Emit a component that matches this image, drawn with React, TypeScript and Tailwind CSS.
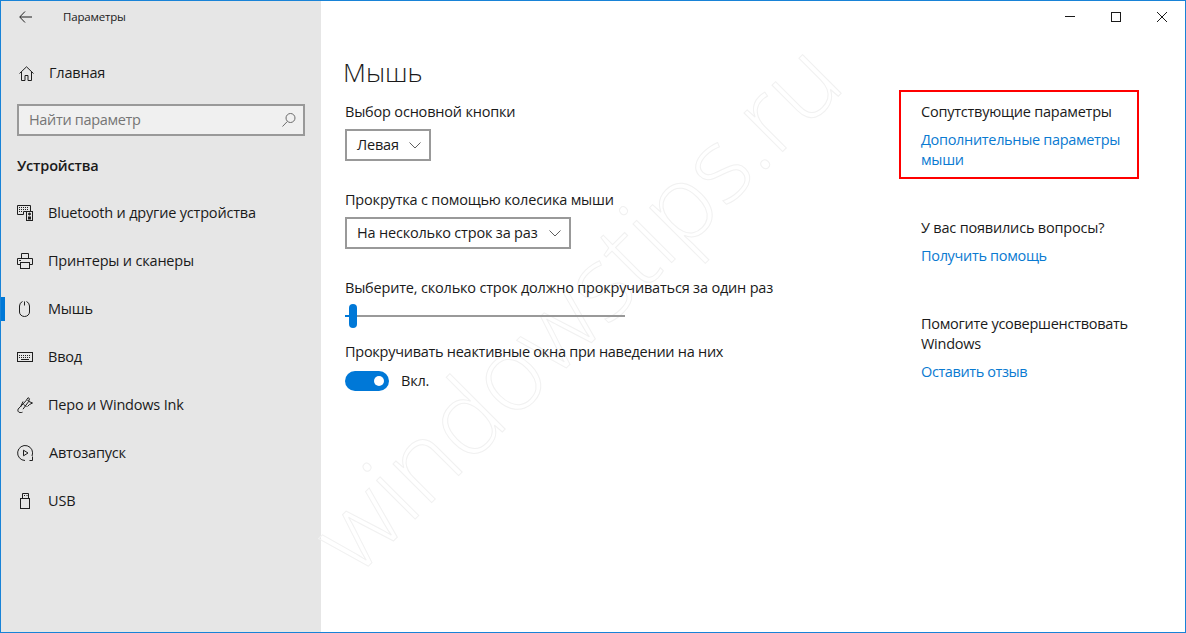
import React from "react";

const S = ({ children, w = 16, h = 16 }: { children: React.ReactNode; w?: number; h?: number }) => (
  <svg width={w} height={h} viewBox={`0 0 ${w} ${h}`} fill="none" stroke="#1f1f1f" strokeWidth="1" className="block shrink-0">
    {children}
  </svg>
);

const icons: Record<string, React.ReactNode> = {
  devices: (
    <S>
      <path d="M.5 .5h13v6h-7v3h-6z" />
      <path d="M2 2.500h10M2 4.500h10M2 6.500h3" strokeDasharray="1 1" />
      <rect x="9.500" y="6.500" width="6" height="9" fill="#e6e6e6" />
      <circle cx="12.500" cy="9" r="1" fill="#1f1f1f" />
      <rect x="11" y="11.500" width="3" height="3" fill="#1f1f1f" stroke="none" />
    </S>
  ),
  printer: (
    <S>
      <path d="M4.500 5.500v-5h7v5M3.500 11.500h-3v-6h15v6h-3" />
      <rect x="3.500" y="9.500" width="9" height="6" />
      <path d="M2 7.500h2" />
    </S>
  ),
  mouse: (
    <S>
      <path d="M5.500 .5a5 5 0 0 0-3 4.500v6a5 4.500 0 0 0 10 0V5a5 5 0 0 0-3-4.500" />
      <path d="M7.500 .5v4" />
    </S>
  ),
  keyboard: (
    <S>
      <rect x=".5" y="3.500" width="15" height="9" />
      <path d="M2 6.500h12M2 8.500h12" strokeDasharray="1 1" />
      <path d="M4 10.500h8" />
    </S>
  ),
  pen: (
    <S>
      <path d="M5.500 15.200c-1.500.8-3.800.5-4.500-1-.6-1.500.5-3 2-4l6-6.500 2-3 1.500 1-1 3-5.500 7.500" />
      <path d="M6 4.500 3.500 10M10.500 3l1.500 1.500 3.500 1.500-3 1.500-2 2" />
      <path d="M6.500 7.500l3 2" />
    </S>
  ),
  play: (
    <S>
      <path d="M15 11A7.500 7.500 0 1 0 8 15.500" />
      <path d="M12.500 15.500h3v-4" />
      <path d="M6.500 5.200v5.600l4.500-2.800z" />
    </S>
  ),
  usb: (
    <S>
      <path d="M5.500 .5h6v5h-6z" />
      <rect x="3.500" y="5.500" width="9" height="10" />
      <path d="M7 2.500h1M9.500 2.500h1" />
    </S>
  ),
};

const nav = [
  ["devices", "Bluetooth и другие устройства"],
  ["printer", "Принтеры и сканеры"],
  ["mouse", "Мышь"],
  ["keyboard", "Ввод"],
  ["pen", "Перо и Windows Ink"],
  ["play", "Автозапуск"],
  ["usb", "USB"],
];

const Chevron = () => (
  <svg width="12" height="7" viewBox="0 0 12 7" fill="none" stroke="#5f5f5f" strokeWidth="1" className="block">
    <path d="M.5 .5 6 6l5.500-5.500" />
  </svg>
);

const Select = ({ label, w }: { label: string; w: string }) => (
  <div className={`flex h-[32px] items-center justify-between border-2 border-[#999999] pl-[10px] pr-[8px] ${w}`}>
    <span>{label}</span>
    <Chevron />
  </div>
);

export default function App() {
  return (
    <div
      className="relative flex h-[633px] w-[1186px] overflow-hidden border border-[#1883d7] bg-white text-[14.5px] leading-[20px] tracking-[-0.19px] text-[#1a1a1a]"
      style={{ fontFamily: '"Open Sans", "Noto Sans", sans-serif' }}
    >
      <aside className="flex w-[320px] shrink-0 flex-col bg-[#e6e6e6]">
        <div className="flex h-[32px] items-center pl-[18px]">
          <svg width="13" height="12" viewBox="0 0 13 12" fill="none" stroke="#1f1f1f" strokeWidth="1" className="block">
            <path d="M13 6H1M6 .5.700 6 6 11.500" />
          </svg>
          <span className="ml-[31px] text-[11.5px]">Параметры</span>
        </div>
        <div className="mt-[16px] flex h-[48px] items-center pl-[18px]">
          <svg width="15" height="15" viewBox="0 0 15 15" fill="none" stroke="#1f1f1f" strokeWidth="1" className="block">
            <path d="M.500 7.500 7.500 .800l7 6.700M2.500 6v8.500h3.500V9.500h3v5h3.500V6" />
          </svg>
          <span className="ml-[15px]">Главная</span>
        </div>
        <div className="mx-[16px] mt-[7px] flex h-[32px] items-center justify-between border-2 border-[#999999] bg-[#f0f0f0] pl-[10px] pr-[7px] tracking-[-0.33px] text-[#757575]">
          <span>Найти параметр</span>
          <svg width="14" height="14" viewBox="0 0 14 14" fill="none" stroke="#6b6b6b" strokeWidth="1" className="block">
            <circle cx="8.500" cy="5" r="4.500" />
            <path d="M5.300 8.500.500 13.500" />
          </svg>
        </div>
        <div className="ml-[16px] mt-[20px] font-semibold">Устройства</div>
        <nav className="mt-[13px] flex flex-col">
          {nav.map(([ic, label]) => (
            <div key={label} className="relative flex h-[48px] items-center pl-[16px]">
              {label === "Мышь" && <div className="absolute left-0 top-[12px] h-[24px] w-[4px] bg-[#0078d7]" />}
              {icons[ic]}
              <span className={label === "Автозапуск" ? "ml-[16px]" : "ml-[15px]"}>{label}</span>
            </div>
          ))}
        </nav>
      </aside>

      <main className="relative flex min-w-0 flex-1 flex-col">
        <div
          className="pointer-events-none absolute left-[-127px] top-[252px] w-[760px] -rotate-45 whitespace-nowrap text-center text-[103px] leading-none tracking-normal text-transparent [-webkit-text-stroke:1px_#f1f1f1]"
          style={{ fontWeight: 300 }}
        >
          windowstips.ru
        </div>
        <div className="relative flex h-[31px] justify-end">
          <div className="flex h-[31px] w-[46px] items-center justify-center">
            <div className="h-px w-[10px] bg-[#1a1a1a]" />
          </div>
          <div className="flex h-[31px] w-[46px] items-center justify-center">
            <div className="h-[10px] w-[10px] border border-[#1a1a1a]" />
          </div>
          <div className="flex h-[31px] w-[46px] items-center justify-center">
            <svg width="10" height="10" viewBox="0 0 10 10" stroke="#1a1a1a" strokeWidth="1" className="block">
              <path d="M0 0 10 10M10 0 0 10" />
            </svg>
          </div>
        </div>
        <div className="relative flex flex-1">
          <section className="ml-[24px] w-[554px] shrink-0">
            <h1 className="ml-[-2px] mt-[20px] text-[26.5px] font-light leading-[40px] tracking-normal">Мышь</h1>
            <div className="mt-[10px]">Выбор основной кнопки</div>
            <div className="mt-[7px]"><Select label="Левая" w="w-[86px]" /></div>
            <div className="mt-[29px]">Прокрутка с помощью колесика мыши</div>
            <div className="mt-[7px]"><Select label="На несколько строк за раз" w="w-[226px]" /></div>
            <div className="mt-[29px]">Выберите, сколько строк должно прокручиваться за один раз</div>
            <div className="relative mt-[6px] flex h-[24px] w-[280px] items-center">
              <div className="h-[2px] w-full bg-[#999999]" />
              <div className="absolute left-0 top-[11px] h-[2px] w-[5px] bg-[#0078d7]" />
              <div className="absolute left-[4px] top-0 h-[24px] w-[8px] rounded-full bg-[#0078d7]" />
            </div>
            <div className="mt-[14px] tracking-[-0.27px]">Прокручивать неактивные окна при наведении на них</div>
            <div className="mt-[9px] flex items-center">
              <div className="flex h-[20px] w-[44px] items-center justify-end rounded-full bg-[#0078d7] pr-[5px]">
                <div className="h-[10px] w-[10px] rounded-full bg-white" />
              </div>
              <span className="ml-[12px]">Вкл.</span>
            </div>
          </section>
          <section className="mt-[58px] w-[240px] shrink-0">
            <div className="h-[89px] border-2 border-[#ff0000] pl-[20px] pr-[10px] pt-[10px]">
              <div className="tracking-[-0.23px]">Сопутствующие параметры</div>
              <div className="mt-[8px] tracking-[-0.32px] text-[#0a7ad1]">Дополнительные параметры мыши</div>
            </div>
            <div className="ml-[22px] mt-[39px]">У вас появились вопросы?</div>
            <div className="ml-[22px] mt-[8px] tracking-[-0.32px] text-[#0a7ad1]">Получить помощь</div>
            <div className="ml-[22px] mt-[48px] w-[212px] tracking-[-0.27px]">Помогите усовершенствовать Windows</div>
            <div className="ml-[22px] mt-[8px] tracking-[-0.4px] text-[#0a7ad1]">Оставить отзыв</div>
          </section>
        </div>
      </main>
    </div>
  );
}
